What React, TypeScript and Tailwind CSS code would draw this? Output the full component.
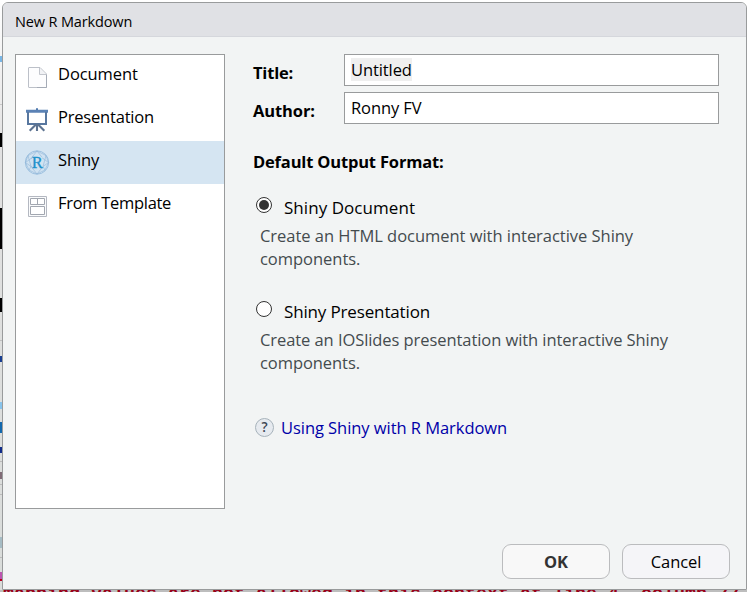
import React from "react";

function DocumentIcon() {
  return (
    <svg width="24" height="26" viewBox="0 0 24 26" fill="none">
      <path d="M4 3.5H15L21.5 10V23.5H4Q3.5 23.5 3.5 23V4Q3.5 3.5 4 3.5Z" fill="#fdfdfe" stroke="#bcc0c8" />
      <path d="M14.5 4V10.5H21" stroke="#c3c6cd" fill="#f1f2f5" />
      <path d="M21.5 11V23.5H12" stroke="#a5abb6" />
    </svg>
  );
}

function PresentationIcon() {
  return (
    <svg width="24" height="26" viewBox="0 0 24 26" fill="none">
      <path d="M11 1.3H13V3H11Z" fill="#4b76ad" />
      <path d="M1 2.8H23V5.8H1Z" fill="#5b82b5" />
      <path d="M3 5V17H21V5" stroke="#58779f" strokeWidth="2" />
      <path d="M12 17V24M11.2 17.2L4.7 23.8M12.8 17.2L19.3 23.8" stroke="#5d7391" strokeWidth="2.1" />
    </svg>
  );
}

function ShinyIcon() {
  return (
    <svg width="26" height="26" viewBox="0 0 26 26" fill="none">
      <circle cx="13" cy="12.5" r="11.7" fill="#d0e2f1" stroke="#9fc2e0" strokeWidth="1" />
      <path
        d="M13 1L4 5.5L1.5 12.5L5 20L13 24L21 20L24.5 12.5L22 5.5ZM13 1L7 8.5L1.5 12.5L7 16.5L13 24L19 16.5L24.5 12.5L19 8.5ZM4 5.5L7 16.5L5 20M22 5.5L19 16.5L21 20M7 8.5H19M7 16.5H19"
        stroke="#8fb6d9"
        strokeWidth=".6"
      />
      <rect x="8" y="7" width="10.5" height="11" fill="#cfe3f2" opacity=".9" />
      <text x="13.3" y="18" textAnchor="middle" fontSize="16.5" fill="#1d91cb" stroke="#1d91cb" strokeWidth=".3" fontFamily="Liberation Serif, serif">
        R
      </text>
    </svg>
  );
}

function TemplateIcon() {
  return (
    <svg width="24" height="26" viewBox="0 0 24 26" fill="none">
      <path d="M3.5 3.5H21.5V23.5H3.5Z" fill="#fafbfc" stroke="#b4b8c1" />
      <path d="M5.5 5.5H19.5V11.5H5.5ZM12.5 5.5V11.5M5.5 13.5H19.5V21.5H5.5Z" fill="#fff" stroke="#a2a7b0" />
    </svg>
  );
}

const categories = [
  { label: "Document", icon: <DocumentIcon />, track: "tracking-[-0.08px]" },
  { label: "Presentation", icon: <PresentationIcon />, track: "tracking-[-0.2px]" },
  { label: "Shiny", icon: <ShinyIcon />, track: "tracking-[-0.12px]", selected: true },
  { label: "From Template", icon: <TemplateIcon />, track: "tracking-[-0.3px]" },
];

function Category({ item }: { item: (typeof categories)[number] }) {
  return (
    <li className={`flex h-[43px] ${item.selected ? "bg-[#d5e5f2]" : ""}`}>
      <span className="flex w-[42px] justify-center pt-[9px]">{item.icon}</span>
      <span className={`pt-[7px] leading-6 ${item.track}`}>{item.label}</span>
    </li>
  );
}

function Radio({ checked }: { checked?: boolean }) {
  return (
    <span className="mt-[1px] flex size-4 shrink-0 items-center justify-center rounded-full border border-[#333] bg-white">
      {checked && <span className="size-2.5 rounded-full bg-[#333]" />}
    </span>
  );
}

type FormatProps = { title: string; titleTrack: string; lines: string[]; track: string; checked?: boolean };

function Format({ title, titleTrack, lines, track, checked }: FormatProps) {
  return (
    <div className="h-[104px]">
      <div className="flex h-[25px] gap-3 pl-[3px]">
        <Radio checked={checked} />
        <span className={`text-[17px] leading-6 ${titleTrack}`}>{title}</span>
      </div>
      <p className={`pt-[3px] pl-[7px] leading-[23px] whitespace-nowrap text-[#444b4e] ${track}`}>
        {lines[0]}
        <br />
        {lines[1]}
      </p>
    </div>
  );
}

/** Slivers of the editor window that stay visible behind the dialog. */
function EditorEdge() {
  const marks = [
    { top: "top-[56px]", look: "h-[6px] bg-[#78b6e6]" },
    { top: "top-[104px]", look: "h-px bg-[#c8c8c8]" },
    { top: "top-[133px]", look: "h-[14px] bg-black" },
    { top: "top-[208px]", look: "h-[41px] bg-black" },
    { top: "top-[298px]", look: "h-[14px] bg-black" },
    { top: "top-[340px]", look: "h-px bg-[#c0c0c0]" },
    { top: "top-[356px]", look: "h-[6px] bg-[#183e91]" },
    { top: "top-[402px]", look: "h-[7px] bg-[#88c4ec]" },
    { top: "top-[422px]", look: "h-[11px] bg-[#1268ae]" },
    { top: "top-[447px]", look: "h-[6px] bg-[#102c8a]" },
    { top: "top-[461px]", look: "h-px bg-[#bbb]" },
    { top: "top-[472px]", look: "h-[7px] bg-[#806b76]" },
    { top: "top-[484px]", look: "h-px bg-[#bbb]" },
    { top: "top-[494px]", look: "h-px bg-[#bbb]" },
    { top: "top-[537px]", look: "h-[11px] bg-[#a6bcc4]" },
    { top: "top-[557px]", look: "h-px bg-[#bbb]" },
    { top: "top-[572px]", look: "h-[7px] bg-[#bd55b0]" },
    { top: "top-[579px]", look: "h-[2px] bg-[#b8001c]" },
  ];
  return (
    <>
      <div className="absolute inset-y-0 left-0 w-[2px] bg-linear-to-b from-white via-[#e2e2e2] via-25% to-[#d9dcda]" />
      {marks.map((m) => (
        <div key={m.top} className={`absolute left-0 w-[2px] ${m.top} ${m.look}`} />
      ))}
      <div className="absolute top-[590px] left-0 h-[2px] w-full bg-[#bdbdbd]">
        <div className="absolute -top-[5px] left-[3px] font-['Liberation_Mono',monospace] text-[18.33px] leading-5 font-bold whitespace-nowrap text-[#980018]">
          mapping values are not allowed in this context at line 4, column 77
        </div>
      </div>
    </>
  );
}

export default function App() {
  return (
    <div className="relative h-[592px] w-[747px] overflow-hidden bg-white pt-[2px] pl-[2px] font-['Open_Sans','Noto_Sans',sans-serif] text-[16.5px] text-black">
      <EditorEdge />
      <div className="relative flex h-[588px] w-[745px] flex-col overflow-hidden rounded-t-[6px] border border-[#999b9c] bg-[#f2f4f4]">
        <header className="h-[34px] shrink-0 border-b border-[#d5d7dc] bg-[#e0e1e5] pt-[9px] pl-[12px] text-[14.5px] leading-5 tracking-[-0.14px]">
          New R Markdown
        </header>
        <div className="flex pt-[17px] pl-[12px]">
          <ul className="h-[455px] w-[210px] shrink-0 border border-[#999b9c] bg-white">
            {categories.map((c) => (
              <Category key={c.label} item={c} />
            ))}
          </ul>
          <main className="ml-[28px] w-[466px]">
            <div className="flex h-[38px]">
              <label className="w-[91px] pt-[7px] leading-6 font-bold tracking-[-0.2px]">Title:</label>
              <div className="h-8 w-[375px] border border-[#999b9c] bg-white pt-[3px] pl-[6px]">
                <span className="inline-block h-[23px] bg-[#efefef] leading-6 tracking-[-0.1px]">Untitled</span>
              </div>
            </div>
            <div className="flex h-[38px]">
              <label className="w-[91px] pt-[7px] leading-6 font-bold tracking-[-0.1px]">Author:</label>
              <div className="h-8 w-[375px] border border-[#999b9c] bg-white pt-[3px] pl-[6px]">
                <span className="inline-block leading-6 tracking-[-0.1px]">Ronny FV</span>
              </div>
            </div>
            <h2 className="h-[66px] pt-[20px] leading-6 font-bold tracking-[-0.17px]">Default Output Format:</h2>
            <Format
              checked
              title="Shiny Document"
              titleTrack="tracking-[0.05px]"
              lines={["Create an HTML document with interactive Shiny", "components."]}
              track="tracking-[-0.03px]"
            />
            <Format
              title="Shiny Presentation"
              titleTrack="tracking-[-0.15px]"
              lines={["Create an IOSlides presentation with interactive Shiny", "components."]}
              track="tracking-[-0.07px]"
            />
            <div className="flex pt-[10px] pl-[2px]">
              <span className="mt-[4px] flex size-[19px] items-center justify-center rounded-full border border-[#a7b3bb] bg-[#e6eaef] text-[13.5px] leading-none font-semibold text-[#3b4653]">
                ?
              </span>
              <a className="ml-[7px] pt-[2px] leading-6 tracking-[-0.05px] text-[#0000a8]">Using Shiny with R Markdown</a>
            </div>
          </main>
        </div>
        <footer className="mt-auto flex justify-end gap-3 pr-[16px] pb-[10px]">
          <button className="h-[35px] w-[108px] rounded-[9px] border border-[#bbbcbe] bg-[#f8f8f8] pt-[2px] font-bold text-[#333]">OK</button>
          <button className="h-[35px] w-[108px] rounded-[9px] border border-[#bbbcbe] bg-[#f5f5f8] pt-[2px] tracking-[-0.1px]">Cancel</button>
        </footer>
      </div>
    </div>
  );
}
